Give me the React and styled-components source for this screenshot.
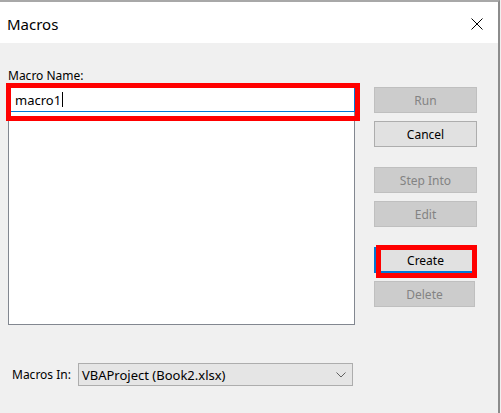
import React from "react";
import styled, { createGlobalStyle } from "styled-components";

const GlobalStyle = createGlobalStyle`
    html, body {
        margin: 0;
        padding: 0;
        background: #f0f0f0;
    }
    body {
        font-family: "Noto Sans", "Open Sans", sans-serif;
        color: #000;
    }
`;

const Window = styled.div`
    width: 498px;
    height: 411px;
    background: #f0f0f0;
    border-top: 2px solid #a8a8a8;
    border-right: 2px solid #8c8c8c;
    display: flex;
    flex-direction: column;
`;

const TitleBar = styled.div`
    height: 41px;
    background: #ffffff;
    display: flex;
    align-items: center;
    justify-content: space-between;
    padding: 2px 15px 0 7px;
    box-sizing: border-box;
`;

const Title = styled.span`
    font-size: 15px;
    color: #000;
`;

const Body = styled.div`
    flex: 1;
    display: flex;
    flex-direction: column;
    padding-left: 8px;
`;

const Main = styled.div`
    display: flex;
    gap: 19px;
`;

const LeftCol = styled.div`
    width: 347px;
    padding-top: 25px;
    display: flex;
    flex-direction: column;
`;

const Label = styled.label`
    font-size: 12px;
    line-height: 16px;
    margin-bottom: ${(p) => (p.$inline ? 0 : 3)}px;
`;

// red marker drawn over a control
const Marked = styled.div`
    position: relative;
`;

const Highlight = styled.div`
    position: absolute;
    top: ${(p) => p.$t}px;
    left: ${(p) => p.$l}px;
    right: ${(p) => p.$r}px;
    bottom: ${(p) => p.$b}px;
    border: 5px solid #ff0000;
    pointer-events: none;
    z-index: 2;
`;

const NameInput = styled.div`
    height: 25px;
    box-sizing: border-box;
    border: 1px solid #0078d7;
    background: #fff;
    display: flex;
    align-items: center;
    padding-left: 6px;
    font-size: 13px;
`;

const Caret = styled.span`
    display: inline-block;
    width: 1px;
    height: 15px;
    background: #000;
    margin-left: 1px;
`;

const MacroList = styled.div`
    height: 213px;
    box-sizing: border-box;
    border: 1px solid #828790;
    border-top: none;
    background: #fff;
`;

const ButtonCol = styled.div`
    width: 103px;
    padding-top: 44px;
    display: flex;
    flex-direction: column;
`;

const Button = styled.div`
    height: 26px;
    box-sizing: border-box;
    margin-top: ${(p) => p.$gap || 0}px;
    width: ${(p) => p.$w || 103}px;
    display: flex;
    align-items: center;
    justify-content: center;
    font-size: 12px;
    background: ${(p) => (p.$disabled ? "#cccccc" : "#e1e1e1")};
    color: ${(p) => (p.$disabled ? "#838383" : "#000")};
    border: ${(p) =>
        p.$default ? "2px solid #0078d7" : p.$disabled ? "1px solid #bfbfbf" : "1px solid #adadad"};
`;

const Bottom = styled.div`
    margin-top: 38px;
    display: flex;
    align-items: center;
    padding-left: 4px;
`;

const Combo = styled.div`
    margin-left: 7px;
    width: 275px;
    height: 23px;
    box-sizing: border-box;
    border: 1px solid #adadad;
    background: #e5e5e5;
    display: flex;
    align-items: center;
    justify-content: space-between;
    padding: 0 6px 0 3px;
    font-size: 13px;
`;

const CloseIcon = () => (
    <svg width="12" height="12" viewBox="0 0 12 12">
        <path d="M0.5 0.5 L11.5 11.5 M11.5 0.5 L0.5 11.5" stroke="#000" strokeWidth="1" fill="none" />
    </svg>
);

const Chevron = () => (
    <svg width="10" height="6" viewBox="0 0 10 6">
        <path d="M0.5 0.5 L5 5 L9.5 0.5" stroke="#606060" strokeWidth="1" fill="none" />
    </svg>
);

const App = () => {
    return (
        <>
            <GlobalStyle />
            <Window>
                <TitleBar>
                    <Title>Macros</Title>
                    <CloseIcon />
                </TitleBar>
                <Body>
                    <Main>
                        <LeftCol>
                            <Label>Macro Name:</Label>
                            <Marked>
                                <NameInput>
                                    macro1<Caret />
                                </NameInput>
                                <Highlight $t={-4} $l={-2} $r={-5} $b={-9} />
                            </Marked>
                            <MacroList />
                        </LeftCol>
                        <ButtonCol>
                            <Button $disabled>Run</Button>
                            <Button $gap={8}>Cancel</Button>
                            <Button $gap={20} $disabled>Step Into</Button>
                            <Button $gap={8} $disabled>Edit</Button>
                            <Marked>
                                <Button $gap={20} $default>Create</Button>
                                <Highlight $t={18} $l={2} $r={0} $b={-5} />
                            </Marked>
                            <Button $gap={8} $w={101} $disabled>Delete</Button>
                        </ButtonCol>
                    </Main>
                    <Bottom>
                        <Label as="span" $inline>Macros In:</Label>
                        <Combo>
                            <span>VBAProject (Book2.xlsx)</span>
                            <Chevron />
                        </Combo>
                    </Bottom>
                </Body>
            </Window>
        </>
    );
};

export default App;
